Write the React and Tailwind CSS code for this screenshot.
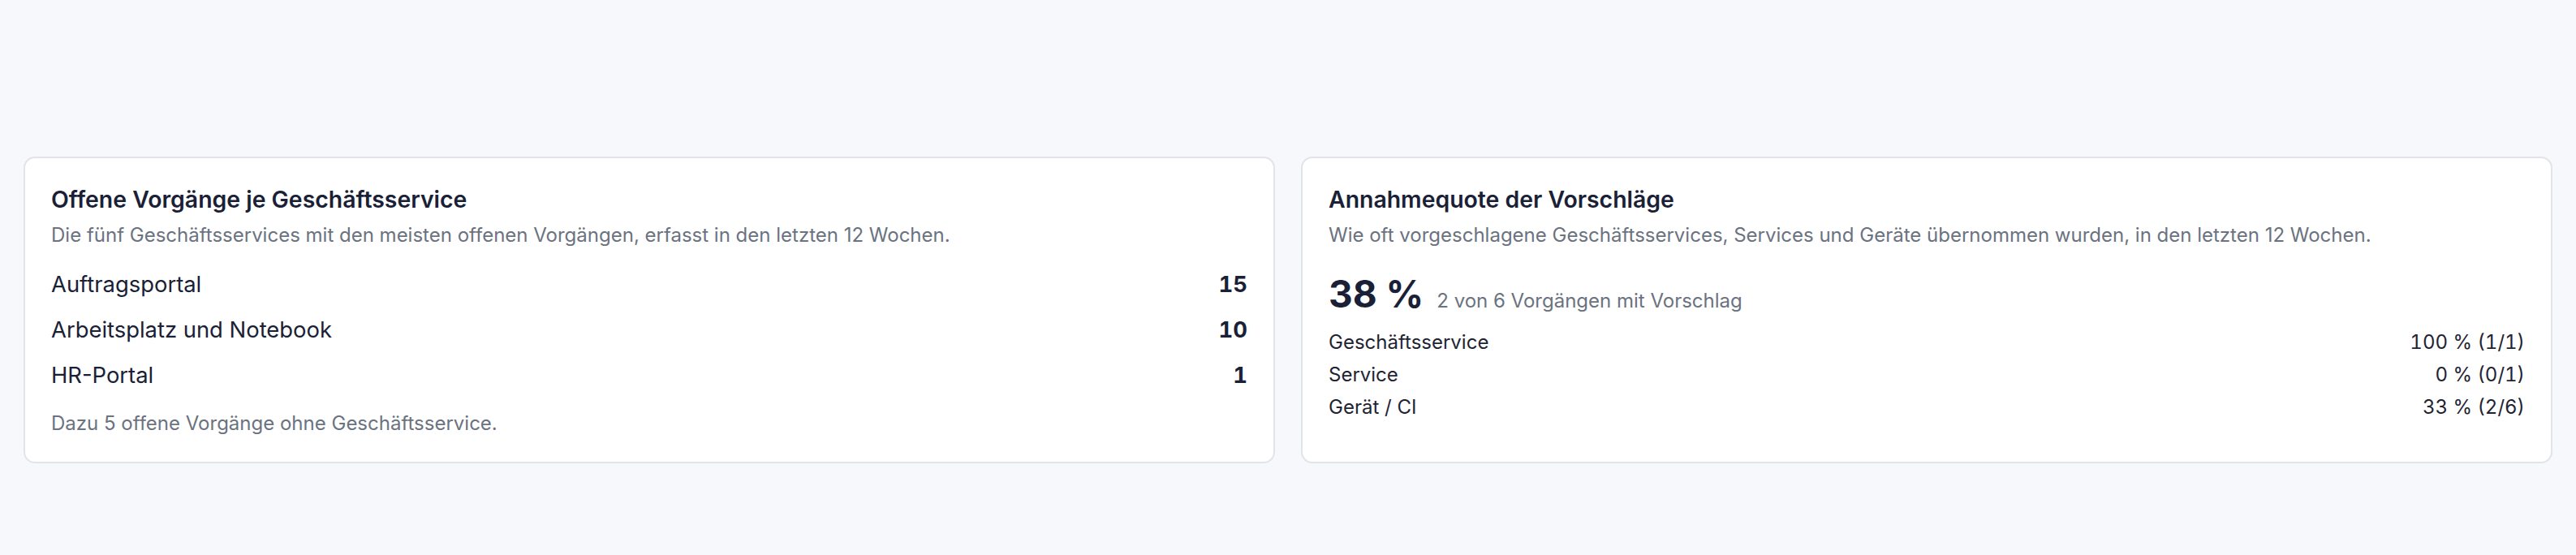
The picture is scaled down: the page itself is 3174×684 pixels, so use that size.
import React from 'react';

const topServices = [
  { name: 'Auftragsportal', count: 15 },
  { name: 'Arbeitsplatz und Notebook', count: 10 },
  { name: 'HR-Portal', count: 1 },
];

const acceptance = [
  { label: 'Geschäftsservice', value: '100 % (1/1)' },
  { label: 'Service', value: '0 % (0/1)' },
  { label: 'Gerät / CI', value: '33 % (2/6)' },
];

function Card({ title, subtitle, children }) {
  return (
    <section className="bg-white border-2 border-[#e2e4e9] rounded-[14px] px-8 pt-[34px] pb-8">
      <h3 className="text-[28.4px] leading-[34px] font-semibold text-[#1a2136]">{title}</h3>
      <p className="mt-3 text-[24px] leading-[30px] text-[#6b7280]">{subtitle}</p>
      {children}
    </section>
  );
}

export default function App() {
  return (
    <div
      className="min-h-screen bg-[#f7f8fb] px-[29px] pt-[193px]"
      style={{ fontFamily: 'Inter, "Noto Sans", sans-serif' }}
    >
      <div className="grid grid-cols-2 gap-8 items-stretch">
        {/* open tickets per business service */}
        <Card
          title="Offene Vorgänge je Geschäftsservice"
          subtitle="Die fünf Geschäftsservices mit den meisten offenen Vorgängen, erfasst in den letzten 12 Wochen."
        >
          <ul className="mt-[26px] flex flex-col gap-4">
            {topServices.map((s) => (
              <li key={s.name} className="flex justify-between items-center h-10 text-[27.4px] text-[#1a2136]">
                <span>{s.name}</span>
                <span className="font-bold tabular-nums">{s.count}</span>
              </li>
            ))}
          </ul>
          <p className="mt-6 text-[24px] leading-[30px] text-[#6b7280]">
            Dazu 5 offene Vorgänge ohne Geschäftsservice.
          </p>
        </Card>

        {/* acceptance rate of suggestions */}
        <Card
          title="Annahmequote der Vorschläge"
          subtitle="Wie oft vorgeschlagene Geschäftsservices, Services und Geräte übernommen wurden, in den letzten 12 Wochen."
        >
          <div className="mt-[29px] flex items-baseline gap-4 h-14">
            <span className="text-[46px] leading-[56px] font-bold text-[#1a2136]">38 %</span>
            <span className="text-[24px] text-[#6b7280]">2 von 6 Vorgängen mit Vorschlag</span>
          </div>
          <ul className="mt-[17px] flex flex-col gap-[10px]">
            {acceptance.map((a) => (
              <li key={a.label} className="flex justify-between text-[24px] leading-[30px] text-[#1f2433]">
                <span>{a.label}</span>
                <span className="tabular-nums">{a.value}</span>
              </li>
            ))}
          </ul>
        </Card>
      </div>
    </div>
  );
}
